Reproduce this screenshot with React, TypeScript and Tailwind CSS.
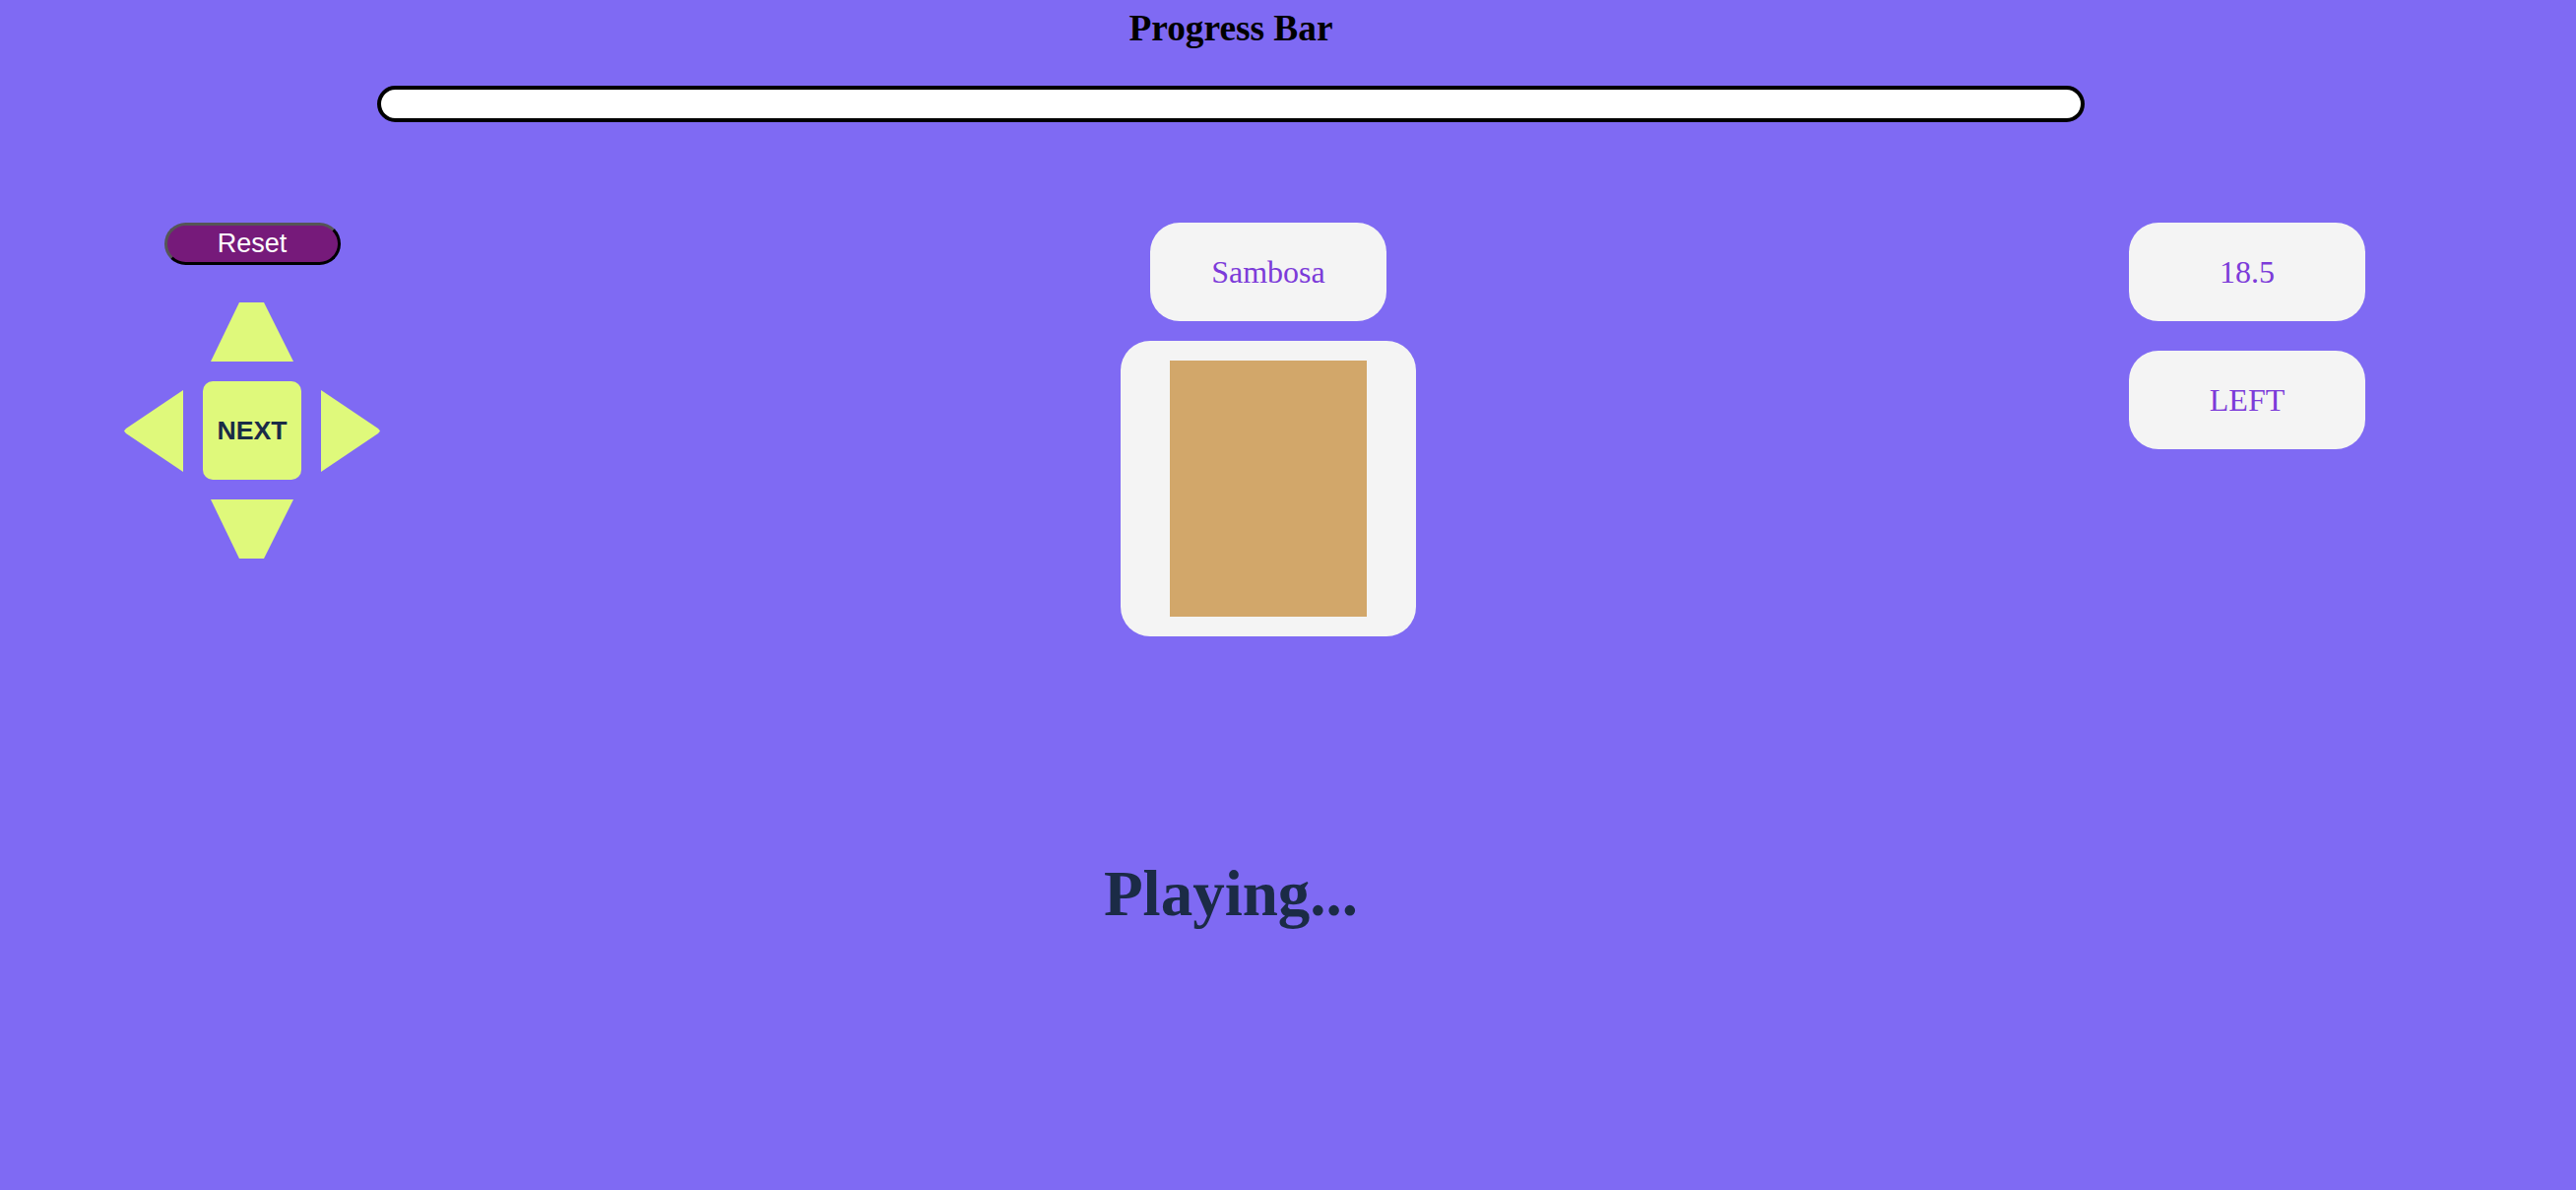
import React from "react";

const serif = { fontFamily: '"Liberation Serif", "Times New Roman", serif' };
const sans = { fontFamily: '"Liberation Sans", Arial, sans-serif' };

function Up() {
  return (
    <svg width="84" height="60" viewBox="0 0 84 60" className="block">
      <polygon points="29,0 54,0 84,60 0,60" fill="#dff97b" />
    </svg>
  );
}
function Down() {
  return (
    <svg width="84" height="60" viewBox="0 0 84 60" className="block">
      <polygon points="0,0 84,0 54,60 29,60" fill="#dff97b" />
    </svg>
  );
}
function Left() {
  return (
    <svg width="60" height="83" viewBox="0 0 60 83" className="block">
      <polygon points="60,0 60,83 2,44 0,41.5 2,39" fill="#dff97b" />
    </svg>
  );
}
function Right() {
  return (
    <svg width="60" height="83" viewBox="0 0 60 83" className="block">
      <polygon points="0,0 58,39 60,41.5 58,44 0,83" fill="#dff97b" />
    </svg>
  );
}

function Card({ children }: { children: React.ReactNode }) {
  return (
    <div
      className="w-[240px] h-[100px] rounded-[30px] bg-[#f4f4f4] flex items-center justify-center text-[32px] leading-none text-[#7c3bd9]"
      style={serif}
    >
      {children}
    </div>
  );
}

export default function App() {
  return (
    <div className="w-full min-h-screen bg-[#7f6af3]">
      <div className="w-[2500px] flex flex-col">
        <h1
          className="pt-[10px] text-center text-[37.33px] leading-none font-bold text-black"
          style={serif}
        >
          Progress Bar
        </h1>
        <div className="mx-auto mt-[40px] w-[1734px] h-[37px] rounded-full border-[4px] border-black bg-white" />

        <div className="mt-[102px] flex items-start pl-[126px]">
          {/* left controls */}
          <div className="w-[260px] flex flex-col items-center">
            <button
              className="w-[179px] h-[43px] rounded-full border-[3px] border-t-[#555555] border-l-[#555555] border-r-black border-b-black bg-[#761a7a] text-white text-[27px] leading-none flex items-center justify-center"
              style={sans}
            >
              Reset
            </button>
            <div className="mt-[38px] flex flex-col items-center gap-[20px]">
              <Up />
              <div className="flex items-center gap-[20px]">
                <Left />
                <div
                  className="w-[100px] h-[100px] rounded-[10px] bg-[#dff97b] flex items-center justify-center text-[26.67px] font-bold text-[#1a2b47] leading-none"
                  style={sans}
                >
                  NEXT
                </div>
                <Right />
              </div>
              <Down />
            </div>
          </div>

          {/* middle */}
          <div className="ml-[752px] w-[300px] flex flex-col items-center gap-[20px]">
            <Card>Sambosa</Card>
            <div className="w-[300px] h-[300px] rounded-[30px] bg-[#f4f4f4] flex justify-center pt-[20px]">
              <div className="w-[200px] h-[260px] bg-[#d2a76a]" />
            </div>
          </div>

          {/* right */}
          <div className="ml-[724px] w-[240px] flex flex-col gap-[30px]">
            <Card>18.5</Card>
            <Card>LEFT</Card>
          </div>
        </div>

        <div
          className="mt-[229px] text-center text-[65px] font-bold leading-none text-[#1b2b46]"
          style={serif}
        >
          Playing...
        </div>
      </div>
    </div>
  );
}
